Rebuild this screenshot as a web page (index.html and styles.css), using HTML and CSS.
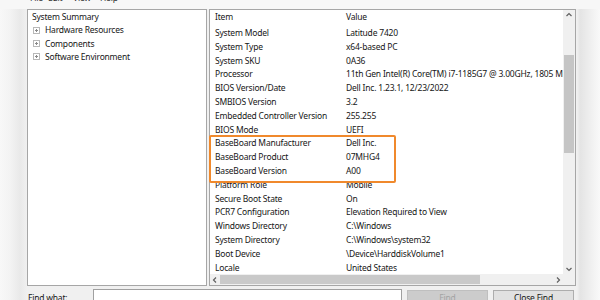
FILE: index.html
```html
<!DOCTYPE html>
<html>
<head>
<meta charset="utf-8">
<link rel="stylesheet" href="styles.css">
</head>
<body>
<div class="window">
  <div class="menubar">
    <span class="menu m-file">File</span><span class="menu m-edit">Edit</span><span class="menu m-view">View</span><span class="menu">Help</span>
  </div>
  <div class="panes">
    <div class="tree">
      <div class="node root">System Summary</div>
      <div class="node"><span class="exp"></span>Hardware Resources</div>
      <div class="node"><span class="exp"></span>Components</div>
      <div class="node"><span class="exp"></span>Software Environment</div>
    </div>
    <div class="list">
      <div class="listbody">
        <div class="rows">
          <div class="row head"><span class="c1">Item</span><span class="c2">Value</span></div>
          <div class="row"><span class="c1">System Model</span><span class="c2">Latitude 7420</span></div>
          <div class="row"><span class="c1">System Type</span><span class="c2">x64-based PC</span></div>
          <div class="row"><span class="c1">System SKU</span><span class="c2">0A36</span></div>
          <div class="row"><span class="c1">Processor</span><span class="c2">11th Gen Intel(R) Core(TM) i7-1185G7 @ 3.00GHz, 1805 Mhz, 4 Core(s), 8 Logical Processor(s)</span></div>
          <div class="row"><span class="c1">BIOS Version/Date</span><span class="c2">Dell Inc. 1.23.1, 12/23/2022</span></div>
          <div class="row"><span class="c1">SMBIOS Version</span><span class="c2">3.2</span></div>
          <div class="row"><span class="c1">Embedded Controller Version</span><span class="c2">255.255</span></div>
          <div class="row"><span class="c1">BIOS Mode</span><span class="c2">UEFI</span></div>
          <div class="row"><span class="c1">BaseBoard Manufacturer</span><span class="c2">Dell Inc.</span></div>
          <div class="row"><span class="c1">BaseBoard Product</span><span class="c2">07MHG4</span></div>
          <div class="row"><span class="c1">BaseBoard Version</span><span class="c2">A00</span></div>
          <div class="row"><span class="c1">Platform Role</span><span class="c2">Mobile</span></div>
          <div class="row"><span class="c1">Secure Boot State</span><span class="c2">On</span></div>
          <div class="row"><span class="c1">PCR7 Configuration</span><span class="c2">Elevation Required to View</span></div>
          <div class="row"><span class="c1">Windows Directory</span><span class="c2">C:\Windows</span></div>
          <div class="row"><span class="c1">System Directory</span><span class="c2">C:\Windows\system32</span></div>
          <div class="row"><span class="c1">Boot Device</span><span class="c2">\Device\HarddiskVolume1</span></div>
          <div class="row"><span class="c1">Locale</span><span class="c2">United States</span></div>
        </div>
        <div class="vscroll">
          <svg class="arrow" width="12" height="10" viewBox="0 0 12 10"><polyline points="3.5,6 6,3.5 8.5,6" fill="none" stroke="#606060" stroke-width="1.2"/></svg>
          <div class="vtrack"><div class="vthumb"></div></div>
          <svg class="arrow" width="12" height="10" viewBox="0 0 12 10"><polyline points="3.5,4 6,6.5 8.5,4" fill="none" stroke="#606060" stroke-width="1.2"/></svg>
        </div>
      </div>
      <div class="hscroll">
        <svg class="arrow" width="10" height="10" viewBox="0 0 10 10"><polyline points="6,2.5 3.5,5 6,7.5" fill="none" stroke="#606060" stroke-width="1.2"/></svg>
        <div class="htrack"><div class="hthumb"></div></div>
        <svg class="arrow" width="10" height="10" viewBox="0 0 10 10"><polyline points="4,2.5 6.5,5 4,7.5" fill="none" stroke="#606060" stroke-width="1.2"/></svg>
        <div class="corner"></div>
      </div>
      <div class="highlight"></div>
    </div>
  </div>
  <div class="findbar">
    <span class="label">Find what:</span>
    <div class="input"></div>
    <div class="btn disabled">Find</div>
    <div class="btn">Close Find</div>
  </div>
</div>
</body>
</html>
```

FILE: styles.css
```css
html, body {
  margin: 0;
  padding: 0;
}
body {
  width: 600px;
  height: 300px;
  overflow: hidden;
  font-family: "Noto Sans", "Open Sans", sans-serif;
  font-size: 8.5px;
  letter-spacing: -0.2px;
  color: #161616;
  background:
    linear-gradient(to right, #f8f8f8 0, #f3f3f3 10px, #e9e9e9 20px, #f0f0f0 27px, #f0f0f0 577px, #e4e4e4 580px, #f4f4f4 595px, #f9f9f9 600px);
}
.window {
  display: flex;
  flex-direction: column;
  height: 300px;
}
.window > * {
  flex: none;
}
.menubar {
  height: 9px;
  display: flex;
  padding-left: 30px;
  overflow: hidden;
  background: #f7f7f7;
}
.menu {
  line-height: 10px;
  margin-top: -7px;
  color: #333;
}
.m-file {
  width: 18px;
}
.m-edit {
  width: 25px;
}
.m-view {
  width: 27px;
}
.panes {
  display: flex;
  gap: 2px;
  margin-left: 27px;
  height: 277px;
}
.tree {
  width: 178px;
  border: 1px solid #a6a6a6;
  background: #fff;
}
.node {
  line-height: 13.4px;
  padding-left: 5px;
  display: flex;
  align-items: center;
  white-space: nowrap;
}
.node.root {
  padding-left: 4px;
}
.exp {
  width: 5px;
  height: 5px;
  border: 1px solid #b8b8b8;
  margin-right: 5px;
  position: relative;
  flex: none;
}
.exp::before {
  content: "";
  position: absolute;
  left: 1px;
  top: 2px;
  width: 3px;
  height: 1px;
  background: #8a8a8a;
}
.exp::after {
  content: "";
  position: absolute;
  left: 2px;
  top: 1px;
  width: 1px;
  height: 3px;
  background: #8a8a8a;
}
.list {
  width: 365px;
  border: 1px solid #a6a6a6;
  background: #fff;
  display: flex;
  flex-direction: column;
  position: relative;
}
.listbody {
  flex: 1;
  display: flex;
  min-height: 0;
}
.rows {
  flex: 1;
  overflow: hidden;
}
.row {
  display: flex;
  height: 13.8px;
  line-height: 14px;
  white-space: nowrap;
  padding-left: 5px;
}
.row.head {
  height: 16px;
}
.c1 {
  width: 131px;
  flex: none;
}
.c2 {
  flex: none;
}
.vscroll {
  width: 12px;
  flex: none;
  background: #f0f0f0;
  display: flex;
  flex-direction: column;
}
.arrow {
  display: block;
  flex: none;
}
.vtrack {
  flex: 1;
  padding-top: 35px;
}
.vthumb {
  margin: 0 1px;
  height: 98px;
  background: #c5c5c5;
}
.hscroll {
  height: 11px;
  display: flex;
  align-items: center;
  background: #f0f0f0;
}
.htrack {
  flex: 1;
  height: 9px;
  display: flex;
  align-items: center;
}
.hthumb {
  width: 260px;
  height: 9px;
  background: #c9c9c9;
}
.corner {
  width: 12px;
  height: 11px;
  background: #f0f0f0;
}
.highlight {
  position: absolute;
  left: -1px;
  top: 125px;
  width: 183px;
  height: 44px;
  border: 2px solid #f0892c;
  border-radius: 2px;
}
.findbar {
  display: flex;
  align-items: flex-start;
  margin-top: 3px;
  padding-left: 28px;
}
.label {
  width: 65px;
  line-height: 14px;
  margin-top: 2px;
}
.input {
  width: 307px;
  height: 14px;
  border: 1px solid #a0a0a0;
  background: #fff;
}
.btn {
  width: 79px;
  height: 14px;
  margin-left: 5px;
  margin-top: 1px;
  border: 1px solid #adadad;
  background: #e1e1e1;
  text-align: center;
  line-height: 14px;
}
.btn.disabled {
  color: #a3a3a3;
  background: #cccccc;
  border-color: #bfbfbf;
}
```
